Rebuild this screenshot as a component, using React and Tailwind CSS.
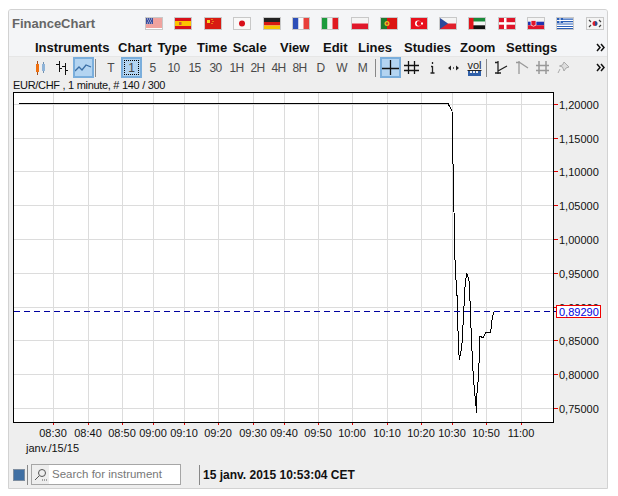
import React from "react";

const menus = [
  ["Instruments", "w-[83px]"],
  ["Chart Type", "w-[79px]"],
  ["Time Scale", "w-[83px]"],
  ["View", "w-[43px]"],
  ["Edit", "w-[35px]"],
  ["Lines", "w-[46px]"],
  ["Studies", "w-[56px]"],
  ["Zoom", "w-[46px]"],
  ["Settings", "w-[60px]"],
];

const scales = ["5", "10", "15", "30", "1H", "2H", "4H", "8H", "D", "W", "M"];

const xTicks = [
  [53, "08:30"], [88, "08:40"], [122, "08:50"], [153, "09:00"], [184, "09:10"], [218, "09:20"],
  [253, "09:30"], [284, "09:40"], [318, "09:50"], [352, "10:00"], [387, "10:10"], [421, "10:20"],
  [452, "10:30"], [486, "10:50"], [521, "11:00"],
];

const yTicks = [
  [104, "1,20000"], [138, "1,15000"], [171, "1,10000"], [205, "1,05000"], [239, "1,00000"],
  [273, "0,95000"], [307, "0,90000"], [340, "0,85000"], [374, "0,80000"], [408, "0,75000"],
];

const curve =
  "19,103.5 448,103.5 452,111 452.5,138 453.5,188 454.5,235 455,260 455.7,275 457.3,300 458.3,343 459.3,360 461.7,348 463.3,320 465,287 466.7,272.7 469.3,281.7 470.7,320 471.7,345 473.3,376.7 475.7,403 476.7,412.7 477,393 478.7,375 479.7,336.7 483.3,337.3 485.7,332.3 490.7,332 492,320 493.7,311.7";

function Flag({ children }) {
  return (
    <svg width="18" height="13" viewBox="0 0 18 13" className="shrink-0">
      <rect x="0.5" y="0.5" width="17" height="12" fill="#fff" stroke="#c8c8c8" />
      <svg x="1" y="1" width="16" height="11" viewBox="0 0 16 11">
        {children}
      </svg>
    </svg>
  );
}

const flags = [
  <>
    <rect width="16" height="11" fill="#fff" />
    <path d="M0 1h16M0 3h16M0 5h16M0 7h16M0 9h16" stroke="#e0473f" strokeWidth="1" />
    <rect width="7" height="6" fill="#3d4f9f" />
    <path d="M1 1h1M3 1h1M5 1h1M2 3h1M4 3h1M1 5h1M3 5h1M5 5h1" stroke="#fff" strokeWidth="0.8" />
  </>,
  <>
    <rect width="16" height="11" fill="#d8101a" />
    <rect y="3" width="16" height="5" fill="#fdc400" />
    <rect x="4" y="4" width="2.5" height="3" fill="#d0533a" />
  </>,
  <>
    <rect width="16" height="11" fill="#d81a12" />
    <rect x="2" y="2" width="3" height="3" fill="#f8d820" />
    <path d="M6.5 1.5h1M7.5 3.5h1M6.5 5.5h1" stroke="#f8d820" />
  </>,
  <>
    <rect width="16" height="11" fill="#f8f8f8" />
    <circle cx="8" cy="5.5" r="3" fill="#d80f1a" />
  </>,
  <>
    <rect width="16" height="4" fill="#222" />
    <rect y="4" width="16" height="3.5" fill="#d81a12" />
    <rect y="7.5" width="16" height="3.5" fill="#f6c400" />
  </>,
  <>
    <rect width="5.5" height="11" fill="#2d4fb8" />
    <rect x="5.5" width="5" height="11" fill="#fafafa" />
    <rect x="10.5" width="5.5" height="11" fill="#e8403a" />
  </>,
  <>
    <rect width="5.5" height="11" fill="#1c9a3c" />
    <rect x="5.5" width="5" height="11" fill="#f2f2f2" />
    <rect x="10.5" width="5.5" height="11" fill="#e01a20" />
  </>,
  <>
    <rect width="16" height="5.5" fill="#f4f4f4" />
    <rect y="5.5" width="16" height="5.5" fill="#e0182a" />
  </>,
  <>
    <rect width="6" height="11" fill="#1e7a2c" />
    <rect x="6" width="10" height="11" fill="#dc1410" />
    <circle cx="6" cy="5.5" r="2.5" fill="#e8c020" />
    <circle cx="6" cy="5.5" r="1.2" fill="#c0402a" />
  </>,
  <>
    <rect width="16" height="11" fill="#e8101c" />
    <circle cx="7" cy="5.5" r="3" fill="#fff" />
    <circle cx="8" cy="5.5" r="2.4" fill="#e8101c" />
    <rect x="10" y="4.5" width="2" height="2" fill="#fff" />
  </>,
  <>
    <rect width="16" height="5.5" fill="#f4f4f4" />
    <rect y="5.5" width="16" height="5.5" fill="#e0202c" />
    <path d="M0 0L8 5.5L0 11z" fill="#2c4a9c" />
  </>,
  <>
    <rect width="16" height="3.7" fill="#1a8a3a" />
    <rect y="3.7" width="16" height="3.6" fill="#f4f4f4" />
    <rect y="7.3" width="16" height="3.7" fill="#111" />
    <rect width="4.5" height="11" fill="#e0141c" />
  </>,
  <>
    <rect width="16" height="11" fill="#e0142a" />
    <rect x="5" width="2.5" height="11" fill="#fff" />
    <rect y="4.2" width="16" height="2.5" fill="#fff" />
  </>,
  <>
    <rect width="16" height="3.7" fill="#f4f4f4" />
    <rect y="3.7" width="16" height="3.6" fill="#2034b0" />
    <rect y="7.3" width="16" height="3.7" fill="#e0142a" />
    <path d="M3 2.500h5v4.500q-2.500 2.500-5 0z" fill="#e0142a" stroke="#fff" strokeWidth="0.7" />
  </>,
  <>
    <rect width="16" height="11" fill="#fff" />
    <path d="M6 1.200h10M6 3.600h10M0 6h16M0 8.500h16M0 10.500h16" stroke="#2a5fb8" strokeWidth="1.200" />
    <rect width="6" height="5" fill="#2a5fb8" />
    <path d="M3 0v5M0 2.500h6" stroke="#fff" />
  </>,
  <>
    <rect width="16" height="11" fill="#f4f4f4" />
    <path d="M8 3a2.500 2.500 0 0 1 0 5z" fill="#2a4a90" />
    <path d="M8 3a2.500 2.500 0 0 0 0 5z" fill="#d8202c" />
    <path d="M2 2l2 2M12 2l2 2M2 9l2-2M12 9l2-2" stroke="#444" strokeWidth="1.200" />
  </>,
];

function ScaleButton({ label, active }) {
  return (
    <div
      className={
        active
          ? "flex h-[21px] w-[21px] items-center justify-center border-2 border-[#7aaedc] bg-[#b3d4f1]"
          : "flex h-[21px] w-[21px] items-center justify-center"
      }
    >
      <span
        className={
          active
            ? "flex h-[15px] w-[15px] items-center justify-center border border-dotted border-black text-[12px] text-[#444]"
            : "text-[12px] tracking-[-0.6px] text-[#4a4a4a]"
        }
      >
        {label}
      </span>
    </div>
  );
}

function Icon({ children, active }) {
  return (
    <div
      className={
        active
          ? "flex h-[21px] w-[21px] items-center justify-center border-2 border-[#7aaedc] bg-[#b3d4f1]"
          : "flex h-[21px] w-[21px] items-center justify-center"
      }
    >
      <svg width="17" height="15" viewBox="0 0 17 15" fill="none">
        {children}
      </svg>
    </div>
  );
}

function Sep() {
  return <div className="h-[18px] w-[1px] shrink-0 bg-[#888]" />;
}

function Chevrons() {
  return (
    <svg width="9" height="9" viewBox="0 0 9 9" fill="none" stroke="#111" strokeWidth="1.500">
      <path d="M1 1l3 3.500-3 3.500M5 1l3 3.500-3 3.500" />
    </svg>
  );
}

function Chart() {
  return (
    <svg
      width="598"
      height="368"
      viewBox="9 91 598 368"
      className="block font-['Liberation_Sans',Arial,sans-serif]"
    >
      <rect x="13.500" y="92.500" width="540" height="329.500" fill="#fff" />
      <g shapeRendering="crispEdges">
        {xTicks.map(([x]) => (
          <g key={x}>
            <path d={`M${x}.5 93V422`} stroke="#dcdcdc" />
            <path d={`M${x}.5 422V425`} stroke="#e00000" />
          </g>
        ))}
        {yTicks.map(([y]) => (
          <g key={y}>
            <path d={`M14 ${y}.5H553`} stroke="#dcdcdc" />
            <path d={`M553 ${y}.5H558`} stroke="#e00000" />
          </g>
        ))}
        <rect x="13.500" y="92.500" width="540" height="329.500" fill="none" stroke="#000" />
        <polyline points={curve} fill="none" stroke="#000" />
        <path d="M14 311.500H556" stroke="#0000a0" strokeDasharray="6 4" />
      </g>
      {yTicks.map(([y, t]) => (
        <text key={t} x="559" y={y + 5} fontSize="11" fill="#111">
          {t}
        </text>
      ))}
      {xTicks.map(([x, t]) => (
        <text key={t} x={x} y="437" fontSize="11" fill="#111" textAnchor="middle">
          {t}
        </text>
      ))}
      <text x="26" y="452" fontSize="11" fill="#111">
        janv./15/15
      </text>
      <rect x="556.500" y="305.500" width="44" height="12" fill="#fff" stroke="#f00000" shapeRendering="crispEdges" />
      <text x="559" y="316" fontSize="11" fill="#0000e0">
        0,89290
      </text>
    </svg>
  );
}

export default function App() {
  return (
    <div className="h-[496px] w-[618px] bg-white pl-[8px] pt-[9px] font-['Liberation_Sans',Arial,sans-serif]">
      <div className="flex h-[480px] w-[600px] flex-col overflow-hidden rounded-tl-[3px] rounded-tr-[3px] border border-[#d2d2d2] bg-[#eeeeee]">
        {/* top bar with logo and flags */}
        <div className="bg-[#f4f5f7]">
          <div className="flex h-[26px] items-center pl-[3px] pt-[1px]">
            <span className="w-[133px] shrink-0 text-[13px] font-bold text-[#666]">FinanceChart</span>
            <div className="flex gap-[11.400px]">
              {flags.map((f, i) => (
                <Flag key={i}>{f}</Flag>
              ))}
            </div>
          </div>
          <div className="flex h-[20px] items-center pl-[26px] pt-[2px]">
            {menus.map(([m, w]) => (
              <span key={m} className={`${w} shrink-0 text-[13px] font-bold leading-none text-[#111] [word-spacing:2px]`}>
                {m}
              </span>
            ))}
            <span className="ml-auto pr-[2px]">
              <Chevrons />
            </span>
          </div>
        </div>

        {/* toolbar */}
        <div className="flex h-[24px] items-start border-t border-[#e6e6e6] pl-[21px]">
          <div className="flex h-[21px] w-[20px] items-center justify-center">
            <svg width="12" height="14" viewBox="0 0 12 14" fill="none" shapeRendering="crispEdges">
              <path d="M3.500 0v14" stroke="#a05020" />
              <rect x="2" y="3" width="3" height="8" fill="#f07010" />
              <path d="M9.500 1v11" stroke="#7090b0" />
              <rect x="8" y="3" width="3" height="7" fill="#90b4d8" />
            </svg>
          </div>
          <div className="flex h-[21px] w-[23px] items-center justify-center">
            <svg width="14" height="15" viewBox="0 0 14 15" fill="none" stroke="#111" shapeRendering="crispEdges">
              <path d="M4.500 1v11M1 4.500h3M4 8.500h3M10.500 3v12M7 6.500h3M10 10.500h3" strokeWidth="1.200" />
            </svg>
          </div>
          <Icon active>
            <path d="M0 11l4-4 3 3 4-5 5 2" stroke="#3a6ea5" strokeWidth="1.300" />
          </Icon>
          <div className="ml-[1px] mt-[2px]">
            <Sep />
          </div>
          <div className="w-[4px]" />
          <ScaleButton label="T" />
          <ScaleButton label="1" active />
          {scales.map((s) => (
            <ScaleButton key={s} label={s} />
          ))}
          <div className="ml-[2px] mt-[2px]">
            <Sep />
          </div>
          <div className="w-[4px]" />
          <Icon active>
            <path d="M8.500 0v15M0 8.500h17" stroke="#111" strokeWidth="1.300" />
          </Icon>
          <Icon>
            <path d="M5.500 1v13M11.500 1v13M1 5.500h15M1 10.500h15" stroke="#111" strokeWidth="1.300" />
          </Icon>
          <Icon>
            <path d="M8.500 2v2M8.500 6v7M7 6.500h1.500M6.500 13h4" stroke="#222" strokeWidth="1.300" />
          </Icon>
          <Icon>
            <path d="M3 8l3-2.500v5zM14 8l-3-2.500v5z" fill="#222" />
            <path d="M8 8h1" stroke="#666" strokeWidth="2" />
          </Icon>
          <div className="flex h-[21px] w-[21px] flex-col items-center justify-center">
            <span className="text-[11px] leading-[10px] text-[#222] underline">vol</span>
            <svg width="13" height="5" viewBox="0 0 13 5" className="mt-[1px]">
              <path d="M0 0h2v2h2v-2h1v2h2v-2h1v2h2v-2h3v5h-13z" fill="#2f5fa8" />
            </svg>
          </div>
          <div className="ml-[1px] mt-[2px]">
            <Sep />
          </div>
          <div className="w-[3px]" />
          <Icon>
            <path d="M6 1v13M3 2.500h3M3 13h6M6 11l9-5" stroke="#222" strokeWidth="1.300" />
          </Icon>
          <Icon>
            <path d="M6 1v13M3 2.500h3M6 2l9 6" stroke="#999" strokeWidth="1.300" />
          </Icon>
          <Icon>
            <path d="M5 1v13M12 1v13M2 5.500h13M2 10.500h13" stroke="#999" strokeWidth="1.500" />
          </Icon>
          <Icon>
            <path d="M9 2l5 5-3 1-2 3-1.500-4-3-1 3-1z" stroke="#aaa" fill="#ddd" />
            <path d="M5 9l-2 4" stroke="#aaa" />
          </Icon>
          <span className="ml-auto pr-[2px] pt-[6px]">
            <Chevrons />
          </span>
        </div>

        {/* legend */}
        <div className="h-[11px] pl-[4px] text-[11px] leading-[11px] tracking-[-0.3px] text-[#111]">
          EUR/CHF , 1 minute, # 140 / 300
        </div>

        <Chart />

        {/* status bar */}
        <div className="flex items-center pl-[4px] pt-[5px]">
          <div className="h-[12px] w-[12px] border border-[#7d8da0] bg-[#3f6fa3]" />
          <div className="ml-[2px] h-[20px] w-[1px] bg-[#888]" />
          <div className="ml-[3px] flex h-[21px] w-[150px] items-center border border-[#a6a6a6] bg-white">
            <div className="flex h-full w-[17px] items-center justify-center bg-[#eeeeee]">
              <svg width="13" height="14" viewBox="0 0 13 14" fill="none" stroke="#555">
                <circle cx="8" cy="5" r="3.500" />
                <path d="M5 8l-4 4M8 12h1M10 12h1M12 12h1" />
              </svg>
            </div>
            <span className="pl-[3px] text-[11.500px] text-[#777]">Search for instrument</span>
          </div>
          <div className="ml-[18px] h-[20px] w-[1px] bg-[#888]" />
          <span className="ml-[3px] text-[12px] font-bold text-[#111]">15 janv. 2015 10:53:04 CET</span>
        </div>
      </div>
    </div>
  );
}
